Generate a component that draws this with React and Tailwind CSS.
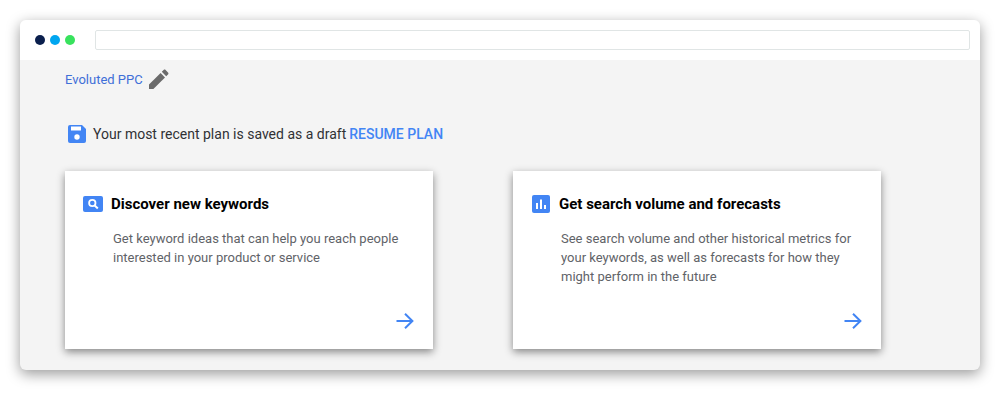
import React from 'react';

function Arrow() {
  return (
    <svg width="18" height="16" viewBox="0 0 18 16" fill="none" stroke="#4285f4" strokeWidth="2">
      <path d="M0.5 8H16.5M9 0.8L16.4 8L9 15.2" />
    </svg>
  );
}

function SearchIcon() {
  return (
    <svg width="20" height="16" viewBox="0 0 20 16">
      <rect width="20" height="16" rx="2" fill="#4285f4" />
      <circle cx="9.3" cy="7" r="3.2" fill="none" stroke="#fff" strokeWidth="1.8" />
      <path d="M11.5 9.3L14.8 12.4" stroke="#fff" strokeWidth="2" />
    </svg>
  );
}

function BarsIcon() {
  return (
    <svg width="18" height="18" viewBox="0 0 18 18">
      <rect width="18" height="18" rx="2" fill="#4285f4" />
      <path d="M4 8h2v6H4zM8 4.5h2V14H8zM12 10h2v4h-2z" fill="#fff" />
    </svg>
  );
}

function SaveIcon() {
  return (
    <svg width="18" height="18" viewBox="0 0 18 18">
      <path d="M2 0h12l4 4v12a2 2 0 0 1-2 2H2a2 2 0 0 1-2-2V2a2 2 0 0 1 2-2z" fill="#4285f4" />
      <rect x="3" y="1.5" width="10" height="4" fill="#fff" />
      <circle cx="9" cy="12" r="2.7" fill="#fff" />
    </svg>
  );
}

function PencilIcon() {
  return (
    <svg width="20" height="20" viewBox="0 0 20 20" fill="#6b6b6b">
      <path d="M0 20V15.6L11.6 4L16 8.4L4.4 20H0Z" />
      <path d="M12.8 2.8L14.6 1C15.2.4 16 .4 16.6 1L19 3.4C19.6 4 19.6 4.8 19 5.4L17.2 7.2L12.8 2.8Z" />
    </svg>
  );
}

function PlanCard({ icon, title, children }) {
  return (
    <div className="w-[368px] h-[178px] bg-white shadow-[0_3px_8px_rgba(0,0,0,0.45)] flex flex-col pt-[23px] pr-[18px] pb-[20px] pl-[18px]">
      <div className="flex items-center h-[20px]">
        <div className="w-[20px] flex justify-center">{icon}</div>
        <h2 className="ml-[8px] text-[15px] font-bold text-black">{title}</h2>
      </div>
      <p className="mt-[15px] ml-[30px] text-[13px] leading-[19px] text-[#5f6368]">{children}</p>
      <div className="mt-auto flex justify-end pr-[1px]">
        <Arrow />
      </div>
    </div>
  );
}

export default function App() {
  return (
    <div className="w-[1000px] h-[400px] bg-white pt-[20px] px-[20px] font-['Roboto',sans-serif] overflow-hidden">
      <div className="w-[960px] h-[350px] rounded-[6px] bg-[#f4f4f4] overflow-hidden shadow-[0_4px_14px_rgba(0,0,0,0.4)]">
        <div className="h-[40px] bg-white flex items-center pl-[15px] pr-[10px]">
          <div className="flex gap-[5px]">
            <span className="w-[10px] h-[10px] rounded-full bg-[#0a1f4d]" />
            <span className="w-[10px] h-[10px] rounded-full bg-[#00a6f0]" />
            <span className="w-[10px] h-[10px] rounded-full bg-[#38e25d]" />
          </div>
          <div className="ml-[20px] flex-1 h-[20px] rounded-[2px] border border-[#e0e5e5] bg-white" />
        </div>
        <div className="pl-[45px]">
          <div className="flex items-center h-[20px] mt-[9px]">
            <span className="pt-[2px] text-[13px] leading-[18px] text-[#3f6fd8]">Evoluted PPC</span>
            <span className="ml-[6px]"><PencilIcon /></span>
          </div>
          <div className="flex items-center h-[20px] mt-[35px] pl-[3px]">
            <SaveIcon />
            <span className="ml-[7px] text-[14px] leading-[22px] text-[#303134]">Your most recent plan is saved as a draft</span>
            <span className="ml-[3px] text-[14px] leading-[22px] font-medium text-[#4285f4]">RESUME PLAN</span>
          </div>
          <div className="flex gap-[80px] mt-[27px]">
            <PlanCard icon={<SearchIcon />} title="Discover new keywords">
              Get keyword ideas that can help you reach people interested in your product or service
            </PlanCard>
            <PlanCard icon={<BarsIcon />} title="Get search volume and forecasts">
              See search volume and other historical metrics for your keywords, as well as forecasts for how they might perform in the future
            </PlanCard>
          </div>
        </div>
      </div>
    </div>
  );
}
